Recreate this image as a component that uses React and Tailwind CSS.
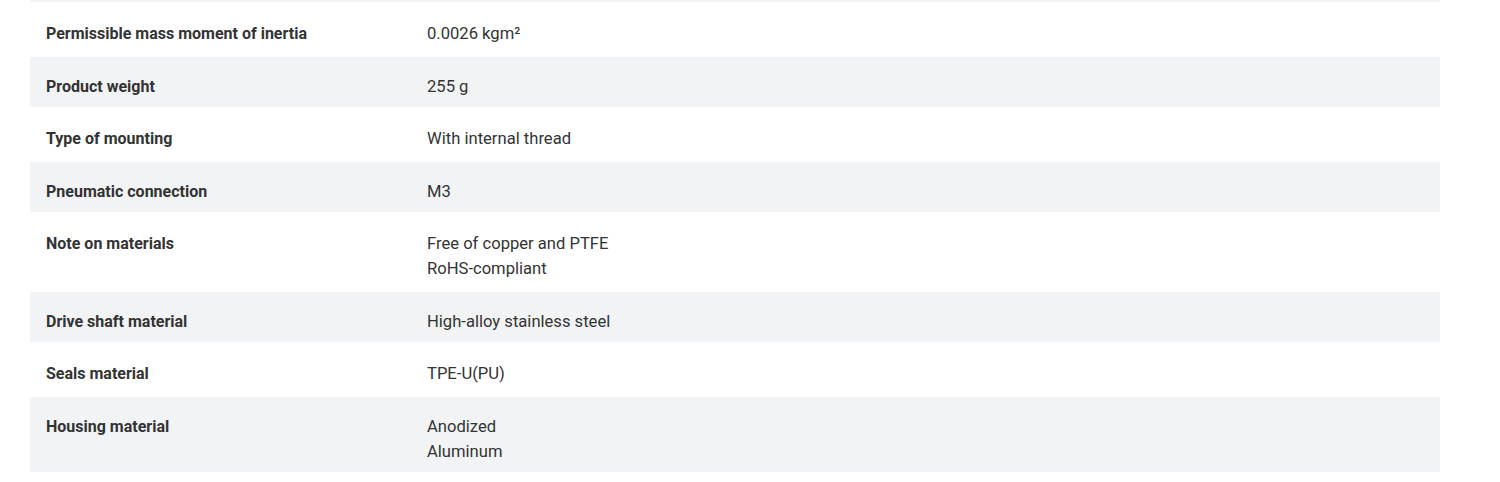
import React from 'react';

const specs = [
  { label: 'Permissible mass moment of inertia', value: ['0.0026 kgm²'] },
  { label: 'Product weight', value: ['255 g'] },
  { label: 'Type of mounting', value: ['With internal thread'] },
  { label: 'Pneumatic connection', value: ['M3'] },
  { label: 'Note on materials', value: ['Free of copper and PTFE', 'RoHS-compliant'] },
  { label: 'Drive shaft material', value: ['High-alloy stainless steel'] },
  { label: 'Seals material', value: ['TPE-U(PU)'] },
  { label: 'Housing material', value: ['Anodized', 'Aluminum'] },
];

function SpecRow({ label, value, shaded }) {
  return (
    <div
      className={
        shaded
          ? 'flex bg-[#f2f3f5] pt-[17px] pb-[8px]'
          : 'flex bg-white pt-[19px] pb-[11px]'
      }
    >
      <div className="w-[397px] shrink-0 pl-4 font-bold text-[#333]">{label}</div>
      <div className="text-[16.6px] text-[#333]">
        {value.map((line) => (
          <div key={line}>{line}</div>
        ))}
      </div>
    </div>
  );
}

export default function App() {
  return (
    <div className="w-[1500px] h-[482px] bg-white px-[30px] pr-[60px] font-['Roboto',sans-serif] text-[16px] leading-[25px]">
      <div className="h-[2px] bg-[#f2f3f5]" />
      {specs.map((s, i) => (
        <SpecRow key={s.label} label={s.label} value={s.value} shaded={i % 2 === 1} />
      ))}
    </div>
  );
}
